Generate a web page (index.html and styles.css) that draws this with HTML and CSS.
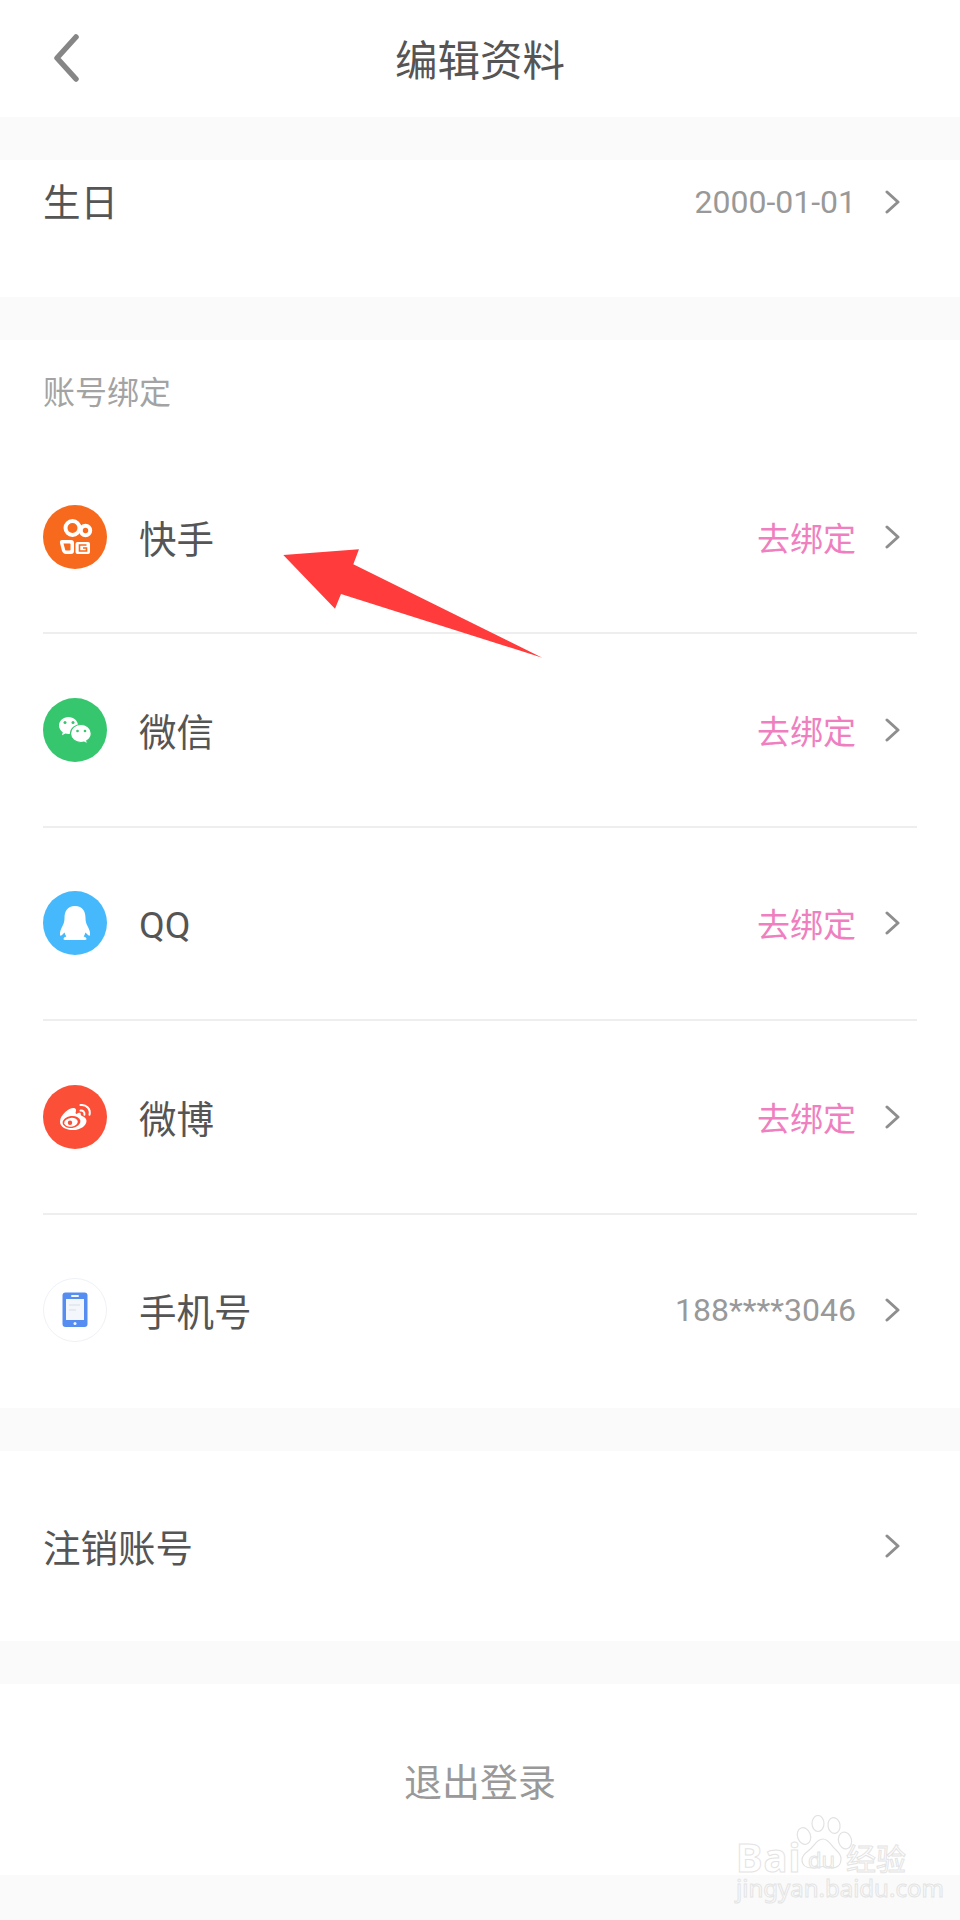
FILE: index.html
```html
<!DOCTYPE html>
<html lang="zh-CN">
<head>
<meta charset="utf-8">
<title>编辑资料</title>
<link rel="stylesheet" href="styles.css">
</head>
<body>
<div class="page">
  <header class="header">
    <svg class="back" viewBox="0 0 30 48"><path d="M24 3 5 24l19 21"/></svg>
    <h1 class="title">编辑资料</h1>
  </header>

  <section class="card birthday">
    <span class="label">生日</span>
    <div class="right">
      <span class="value">2000-01-01</span>
      <svg class="chev" viewBox="0 0 16 24"><path d="M2 2l11 10L2 22"/></svg>
    </div>
  </section>

  <section class="card accounts">
    <div class="section-title">账号绑定</div>

    <div class="row">
      <svg class="icon" viewBox="0 0 64 64"><circle cx="32" cy="32" r="32" fill="#f7691d"/><g fill="none" stroke="#fff" stroke-width="4"><circle cx="29.500" cy="23" r="7"/><circle cx="42.500" cy="25.500" r="4.700"/></g><path fill="#fff" fill-rule="evenodd" d="M19 35h9c2 0 3 1 3 3v8c0 2-1 3-3 3h-5c-2 0-3-1-4-3l-2-8c-.5-2 .5-3 2-3Zm1.500 3.500 1.700 6.300c.2.6.5.8 1 .8h3.500c.6 0 .8-.3.8-.8v-5.500c0-.5-.2-.8-.8-.8Z"/><rect x="32.500" y="37" width="14.500" height="12" rx="2" fill="#fff"/><path fill="none" stroke="#f7691d" stroke-width="1.600" d="M43.500 40h-7v6h7v-3H40"/></svg>
      <span class="name">快手</span>
      <div class="right">
        <span class="bind">去绑定</span>
        <svg class="chev" viewBox="0 0 16 24"><path d="M2 2l11 10L2 22"/></svg>
      </div>
    </div>

    <div class="row">
      <svg class="icon" viewBox="0 0 64 64"><circle cx="32" cy="32" r="32" fill="#35c66e"/><path fill="#fff" d="M25.500 19c-5.300 0-9.500 3.800-9.500 8.500 0 2.800 1.500 5.200 3.800 6.800l-.8 3 3.400-1.700c.9.300 1.900.4 3.100.4 5.300 0 9.500-3.800 9.500-8.500S30.800 19 25.500 19Z"/><path fill="#fff" stroke="#35c66e" stroke-width="1.200" d="M38 26.500c-5.800 0-10.500 4-10.500 9s4.700 9 10.500 9c1.100 0 2.100-.1 3-.4l3.600 2-.8-3.300c2.700-1.600 4.500-4.200 4.500-7.300 0-5-4.500-9-10.300-9Z"/><g fill="#35c66e"><circle cx="22" cy="24.500" r="1.500"/><circle cx="30" cy="24.500" r="1.500"/><circle cx="34.500" cy="33" r="1.300"/><circle cx="42" cy="33" r="1.300"/></g></svg>
      <span class="name">微信</span>
      <div class="right">
        <span class="bind">去绑定</span>
        <svg class="chev" viewBox="0 0 16 24"><path d="M2 2l11 10L2 22"/></svg>
      </div>
    </div>

    <div class="row">
      <svg class="icon" viewBox="0 0 64 64"><circle cx="32" cy="32" r="32" fill="#45b9fb"/><path fill="#fff" d="M32 15c-8 0-10.500 6-10.500 12 0 3-.5 5-2 8-1.500 3-3 6-2.500 9 .2 1 1 1 2 0l2.500-2.500c.4 1.500 1 2.800 1.800 4-2 .5-2.800 1.500-2.800 2.500 0 .7 1 1 3 1h17c2 0 3-.3 3-1 0-1-.8-2-2.800-2.500.8-1.200 1.400-2.500 1.800-4L45 44c1 1 1.800 1 2 0 .5-3-1-6-2.500-9-1.500-3-2-5-2-8 0-6-2.500-12-10.500-12Z"/></svg>
      <span class="name latin">QQ</span>
      <div class="right">
        <span class="bind">去绑定</span>
        <svg class="chev" viewBox="0 0 16 24"><path d="M2 2l11 10L2 22"/></svg>
      </div>
    </div>

    <div class="row">
      <svg class="icon" viewBox="0 0 64 64"><circle cx="32" cy="32" r="32" fill="#fb5037"/><path fill="#fff" d="M33.500 29c-1.400-.5-.9-1.400-.6-2.500 .6-2-.3-3.300-2.300-3.400-2.300-.1-5.300 1.300-8.300 4-3 2.800-5.300 6-5.300 9.600 0 5.300 6.500 8.300 12.800 8.300 8.200 0 13.700-4.900 13.700-9.100 0-2.700-2.300-4.300-4.500-5-1-.3-1.500-.6-1.200-1.600 .3-1.700-1.500-2.300-4.300-.3Z"/><ellipse cx="28.500" cy="37" rx="9" ry="6" fill="#fb5037" transform="rotate(-8 28.500 37)"/><ellipse cx="28" cy="37.300" rx="6.800" ry="4.400" fill="#fff" transform="rotate(-8 28 37.300)"/><circle cx="27" cy="37.800" r="2.200" fill="#fb5037"/><g fill="none" stroke="#fff" stroke-width="2" stroke-linecap="round"><path d="M37.500 25.500c2.300-.4 4.500 1.600 3.900 4.200"/><path d="M37.500 20c5.800-.9 10.500 4.300 9 9.800"/></g></svg>
      <span class="name">微博</span>
      <div class="right">
        <span class="bind">去绑定</span>
        <svg class="chev" viewBox="0 0 16 24"><path d="M2 2l11 10L2 22"/></svg>
      </div>
    </div>

    <div class="row">
      <svg class="icon" viewBox="0 0 64 64"><circle cx="32" cy="32" r="31.500" fill="#fff" stroke="#f0f1f6"/><rect x="19.500" y="14.500" width="25" height="34.500" rx="3" fill="#558ef0"/><rect x="23" y="21" width="18" height="21" fill="#f3f6fb"/><rect x="28" y="17" width="8" height="2" rx="1" fill="#f3f6fb"/><circle cx="32" cy="45.500" r="1.500" fill="#f3f6fb"/><path d="M26 27h11M26 32h7" stroke="#d8dee8" stroke-width="1.200"/></svg>
      <span class="name">手机号</span>
      <div class="right">
        <span class="value">188****3046</span>
        <svg class="chev" viewBox="0 0 16 24"><path d="M2 2l11 10L2 22"/></svg>
      </div>
    </div>
  </section>

  <section class="card action">
    <span class="label">注销账号</span>
    <div class="right">
      <svg class="chev" viewBox="0 0 16 24"><path d="M2 2l11 10L2 22"/></svg>
    </div>
  </section>

  <section class="card logout">退出登录</section>
</div>

<svg class="arrow" viewBox="0 0 960 1920"><polygon points="283.300,555 359,549.300 353.300,564.300 542.300,657.700 341,594 335,608.700"/></svg>

<div class="watermark">
  <svg class="paw" viewBox="0 0 60 62"><g fill="#fff" fill-opacity=".6" stroke="#e2e2e2" stroke-width="1.200"><ellipse cx="11" cy="21" rx="6.500" ry="8.500" transform="rotate(-20 11 21)"/><ellipse cx="25" cy="8.500" rx="6" ry="8"/><ellipse cx="41" cy="10.500" rx="6" ry="8" transform="rotate(-8 41 10.500)"/><ellipse cx="52" cy="25.500" rx="6.500" ry="8.500" transform="rotate(-14 52 25.500)"/><path d="M30 24c6 0 8 7 13 11 4 3.500 5 6 5 9 0 6-4 9-9 9-4 0-6-1.500-9-1.500S25 53 19 53c-6 0-10-3-10-8 0-4 2-6 6-9 6-4 8-12 15-12Z"/></g></svg>
  <span class="wm-bai">Bai</span>
  <span class="wm-du">du</span>
  <span class="wm-jy">经验</span>
  <span class="wm-url">jingyan.baidu.com</span>
</div>
</body>
</html>
```

FILE: styles.css
```css
* { box-sizing: border-box; }
html, body { margin: 0; padding: 0; }
body {
  width: 960px;
  height: 1920px;
  position: relative;
  overflow: hidden;
  background: #fafafa;
  font-family: "Noto Sans CJK SC", "Roboto", sans-serif;
  color: #555;
}
.page {
  display: flex;
  flex-direction: column;
  gap: 43px;
}
.header {
  height: 117px;
  background: #fff;
  display: flex;
  align-items: center;
  justify-content: center;
  position: relative;
}
.back {
  position: absolute;
  left: 52px;
  top: 34px;
  width: 30px;
  height: 48px;
  fill: none;
  stroke: #868686;
  stroke-width: 5.500;
  stroke-linecap: round;
  stroke-linejoin: round;
}
.title {
  margin: 0;
  font-size: 42.500px;
  font-weight: 400;
  line-height: 1;
  color: #555;
}
.card {
  background: #fff;
  display: flex;
}
.label, .name {
  font-size: 37.500px;
  line-height: 44px;
  color: #555;
}
.latin { font-family: "Roboto", sans-serif; position: relative; top: 2px; }
.right {
  margin-left: auto;
  display: flex;
  align-items: center;
  gap: 29px;
}
.value {
  font-family: "Roboto", "Noto Sans CJK SC", sans-serif;
  font-size: 32px;
  line-height: 44px;
  color: #999;
}
.bind {
  font-size: 33px;
  line-height: 44px;
  color: #ef7fc0;
}
.chev {
  width: 16px;
  height: 24px;
  fill: none;
  stroke: #8e8e8e;
  stroke-width: 3;
  stroke-linecap: round;
  stroke-linejoin: round;
}
.birthday {
  height: 137px;
  padding: 20px 59px 0 43px;
  align-items: flex-start;
}
.birthday .label { margin-top: -2px; }
.accounts {
  flex-direction: column;
  height: 1068px;
  padding: 0 43px;
}
.accounts .chev { margin-right: 16px; }
.section-title {
  height: 101px;
  padding-top: 30px;
  font-size: 32px;
  line-height: 40px;
  color: #a3a3a3;
}
.row {
  height: 193.750px;
  display: flex;
  align-items: center;
  border-bottom: 2px solid #eeeeee;
}
.row:last-child { border-bottom-color: transparent; }
.icon {
  width: 64px;
  height: 64px;
  margin-right: 32px;
  flex: none;
}
.action {
  height: 190px;
  padding: 0 59px 0 43px;
  align-items: center;
}
.logout {
  height: 191px;
  align-items: center;
  justify-content: center;
  font-size: 38px;
  color: #999;
}
.arrow {
  position: absolute;
  left: 0;
  top: 0;
  width: 960px;
  height: 1920px;
  fill: #ff3b3b;
  pointer-events: none;
}
.watermark {
  position: absolute;
  left: 730px;
  top: 1815px;
  width: 200px;
  height: 90px;
  color: rgba(255, 255, 255, .75);
  -webkit-text-stroke: 1px #e4e4e4;
  font-family: "Noto Sans", sans-serif;
}
.watermark span { position: absolute; white-space: nowrap; }
.paw {
  position: absolute;
  left: 63px;
  top: 0;
  width: 60px;
  height: 62px;
}
.wm-bai { left: 6px; top: 24px; font-size: 40px; line-height: 36px; font-weight: 700; letter-spacing: 1px; }
.wm-du { left: 78px; top: 30px; font-size: 22px; line-height: 28px; }
.wm-jy { left: 116px; top: 27px; font-size: 30px; line-height: 30px; font-family: "Noto Sans CJK SC", sans-serif; }
.wm-url { left: 6px; top: 60px; font-size: 24px; line-height: 26px; }
```
